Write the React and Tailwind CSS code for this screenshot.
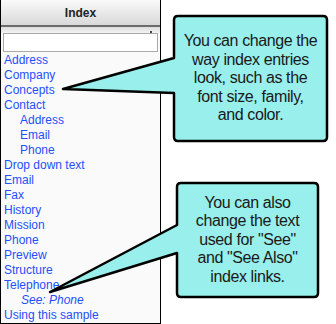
import React from "react";

const entries = [
  { text: "Address" },
  { text: "Company" },
  { text: "Concepts" },
  { text: "Contact" },
  { text: "Address", sub: true },
  { text: "Email", sub: true },
  { text: "Phone", sub: true },
  { text: "Drop down text" },
  { text: "Email" },
  { text: "Fax" },
  { text: "History" },
  { text: "Mission" },
  { text: "Phone" },
  { text: "Preview" },
  { text: "Structure" },
  { text: "Telephone" },
  { text: "See: Phone", sub: true, see: true },
  { text: "Using this sample" },
];

function Callout({ path, box, lines }) {
  return (
    <>
      <svg className="absolute left-0 top-0" width="336" height="324">
        <path d={path} fill="#98efeb" stroke="#000" strokeWidth="2.5" strokeLinejoin="round" />
      </svg>
      <div
        className="absolute flex flex-col items-center justify-center text-[16px] leading-[18.5px] tracking-[-0.4px] text-[#1a1a1a] text-center"
        style={box}
      >
        {lines.map((l, i) => (
          <div key={i} className="whitespace-nowrap">{l}</div>
        ))}
      </div>
    </>
  );
}

export default function App() {
  return (
    <div className="relative w-[336px] h-[324px] bg-white overflow-hidden font-['Liberation_Sans',Arial,sans-serif]">
      {/* Index panel */}
      <div className="w-[161px] h-[324px] flex flex-col bg-[#fafafa] border-l border-r border-b border-black">
        <div className="h-[25px] flex items-center justify-center bg-gradient-to-b from-[#fafafa] to-[#d9d9d9] text-[12px] font-bold text-[#222]">
          Index
        </div>
        <div className="h-[2px] bg-[#6b6b6b]"></div>
        <div className="relative h-[6px] bg-gradient-to-b from-[#dcdcdc] to-[#f4f4f4]">
          <div className="absolute right-[8px] bottom-0 w-[2px] h-[2px] bg-[#445]"></div>
        </div>
        <div className="px-[2px]">
          <div className="h-[19px] bg-white border border-[#a9a9a9]"></div>
        </div>
        <ul className="flex flex-col pt-[1px] px-[3px] text-[12px] leading-[15px] text-[#1f4fff]">
          {entries.map((e, i) => (
            <li key={i} className={(e.sub ? "pl-[16px] " : "") + (e.see ? "italic pl-[17px]" : "")}>
              {e.text}
            </li>
          ))}
        </ul>
      </div>

      {/* Callouts */}
      <Callout
        path="M178 16 H323 Q327 16 327 20 V137 Q327 141 323 141 H178 Q174 141 174 137 V93 L63 89 L174 58 V20 Q174 16 178 16 Z"
        box={{ left: 174, top: 16, width: 153, height: 125 }}
        lines={["You can change the", "way index entries", "look, such as the", "font size, family,", "and color."]}
      />
      <Callout
        path="M181 183 H314 Q318 183 318 187 V293 Q318 297 314 297 H181 Q177 297 177 293 V253 L50 292 L177 225 V187 Q177 183 181 183 Z"
        box={{ left: 177, top: 183, width: 141, height: 114 }}
        lines={["You can also", "change the text", 'used for "See"', 'and "See Also"', "index links."]}
      />
    </div>
  );
}
